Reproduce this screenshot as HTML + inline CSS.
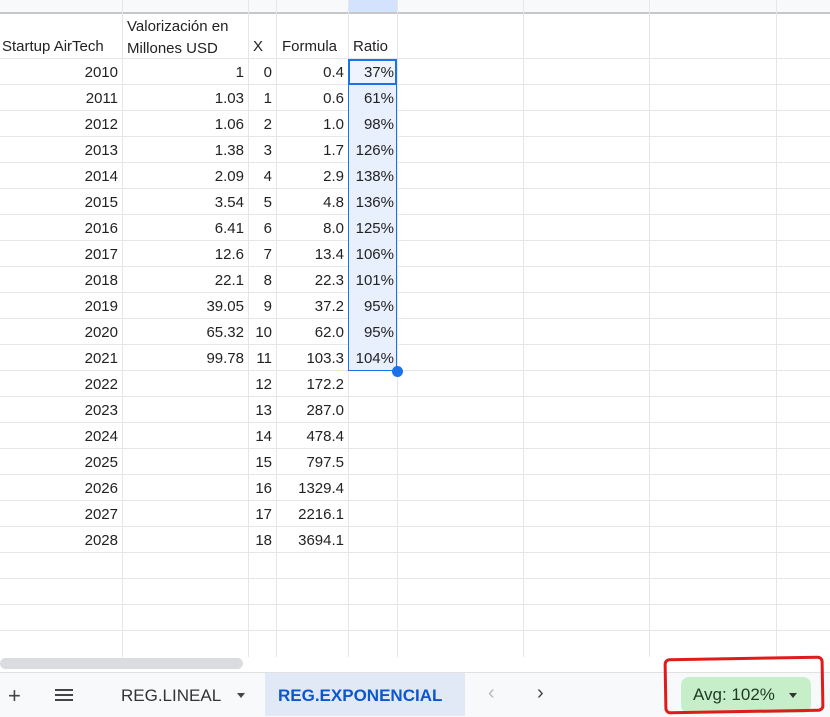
<!DOCTYPE html><html><head><style>
body{margin:0;width:830px;height:716px;overflow:hidden;background:#fff;font-family:"Liberation Sans",Arial,sans-serif;font-size:15px;color:#222;position:relative}
.a{position:absolute}
.vl{position:absolute;top:0;width:1px;height:657px;background:#e6e6e6}
.hl{position:absolute;left:0;width:830px;height:1px;background:#e6e6e6}
.c{position:absolute;height:26px;line-height:28px;text-align:right;white-space:nowrap}
</style></head><body>
<div class="a" style="left:0;top:0;width:830px;height:12px;background:#f8f9fa"></div>
<div class="a" style="left:348px;top:0;width:49px;height:12px;background:#d3e3fd"></div>
<div class="a" style="left:0;top:12px;width:830px;height:2px;background:#c7c7c7"></div>
<div class="vl" style="left:122px"></div><div class="vl" style="left:248px"></div><div class="vl" style="left:276px"></div><div class="vl" style="left:348px"></div><div class="vl" style="left:397px"></div><div class="vl" style="left:523px"></div><div class="vl" style="left:649px"></div><div class="vl" style="left:776px"></div>
<div id="g"></div>
<div class="a" style="left:348px;top:59px;width:49px;height:312px;background:#e8f0fe;border:1px solid #1a73e8;box-sizing:border-box"></div>
<div class="a" style="left:348px;top:59px;width:49px;height:26px;border:2px solid #1a73e8;box-sizing:border-box;background:#eef3fd"></div>
<div class="a" style="left:392px;top:366px;width:11px;height:11px;border-radius:50%;background:#1a73e8"></div>
<div class="a" style="left:2px;top:38px;line-height:18px">Startup AirTech</div>
<div class="a" style="left:127px;top:16px;line-height:22px">Valorización en<br>Millones USD</div>
<div class="a" style="left:253px;top:38px;line-height:18px">X</div>
<div class="a" style="left:282px;top:38px;line-height:18px">Formula</div>
<div class="a" style="left:353px;top:38px;line-height:18px">Ratio</div>
<div id="d"></div>
<div class="a" style="left:0;top:657px;width:830px;height:15px;background:#fff"></div>
<div class="a" style="left:0;top:658px;width:243px;height:11px;border-radius:6px;background:#dadce0"></div>
<div class="a" style="left:0;top:672px;width:830px;height:44px;background:#f8f9fa;border-top:1px solid #e1e1e1"></div>
<div class="a" style="left:8px;top:683px;font-size:22px;color:#444">+</div>
<div class="a" style="left:55px;top:689px;width:18px;height:2px;background:#444;box-shadow:0 5px 0 #444,0 10px 0 #444"></div>
<div class="a" style="left:121px;top:686px;font-size:17px;color:#333">REG.LINEAL</div>
<div class="a" style="left:237px;top:693px;border:4px solid transparent;border-top:5px solid #444"></div>
<div class="a" style="left:265px;top:673px;width:200px;height:43px;background:#e1e9f7"></div>
<div class="a" style="left:278px;top:686px;font-size:17px;color:#0b57d0;font-weight:bold">REG.EXPONENCIAL</div>
<div class="a" style="left:488px;top:682px;font-size:20px;color:#bbb">‹</div>
<div class="a" style="left:537px;top:682px;font-size:20px;color:#444">›</div>
<div class="a" style="left:681px;top:677px;width:130px;height:36px;border-radius:8px;background:#c6efc9"></div>
<div class="a" style="left:693px;top:685px;font-size:17px;color:#1f3a22">Avg: 102%</div>
<div class="a" style="left:789px;top:693px;border:4px solid transparent;border-top:5px solid #333"></div>
<div class="a" style="left:664px;top:657px;width:154px;height:50px;border:3px solid #e01b1b;border-radius:6px;transform:rotate(-1deg)"></div>
<script>
var g='',d='';
for(var i=0;i<23;i++){g+='<div class="hl" style="top:'+(59+26*i-1)+'px"></div>';}
var v=['1','1.03','1.06','1.38','2.09','3.54','6.41','12.6','22.1','39.05','65.32','99.78'];
var f=['0.4','0.6','1.0','1.7','2.9','4.8','8.0','13.4','22.3','37.2','62.0','103.3','172.2','287.0','478.4','797.5','1329.4','2216.1','3694.1'];
var r=['37%','61%','98%','126%','138%','136%','125%','106%','101%','95%','95%','104%'];
for(i=0;i<19;i++){var t=59+26*i;
d+='<div class="c" style="left:0;width:118px;top:'+t+'px">'+(2010+i)+'</div>';
if(v[i])d+='<div class="c" style="left:122px;width:122px;top:'+t+'px">'+v[i]+'</div>';
d+='<div class="c" style="left:248px;width:24px;top:'+t+'px">'+i+'</div>';
d+='<div class="c" style="left:276px;width:68px;top:'+t+'px">'+f[i]+'</div>';
if(r[i])d+='<div class="c" style="left:348px;width:46px;top:'+t+'px">'+r[i]+'</div>';}
document.getElementById('g').innerHTML=g;document.getElementById('d').innerHTML=d;
</script>
</body></html>
